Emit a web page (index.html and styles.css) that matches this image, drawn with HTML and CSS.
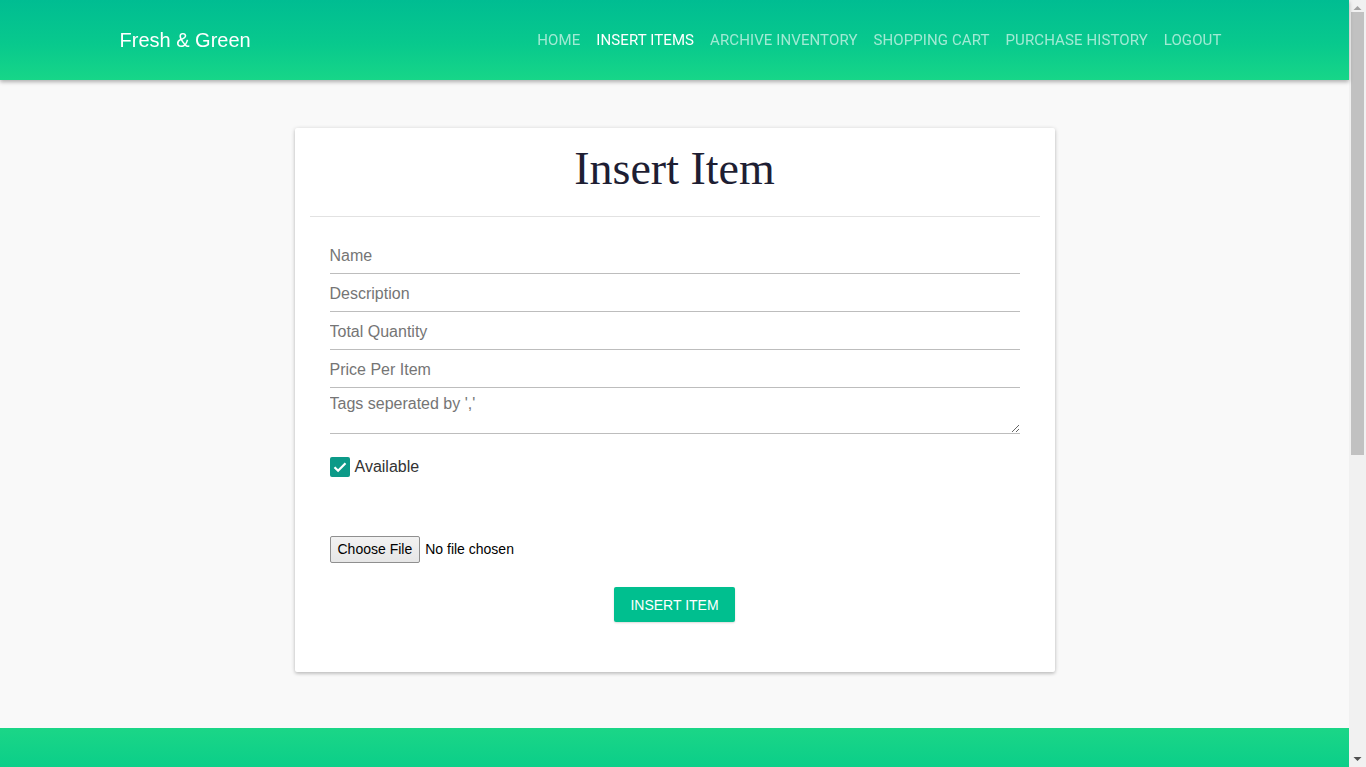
FILE: index.html
```html
<!DOCTYPE html>
<html lang="en">
<head>
<meta charset="utf-8">
<title>Insert Item</title>
<link rel="stylesheet" href="styles.css">
</head>
<body>
<div class="page">
  <header class="topbar">
    <div class="container topbar-inner">
      <a class="brand" href="#">Fresh &amp; Green</a>
      <nav class="nav">
        <a class="nav-link" href="#">HOME</a>
        <a class="nav-link active" href="#">INSERT ITEMS</a>
        <a class="nav-link" href="#">ARCHIVE INVENTORY</a>
        <a class="nav-link" href="#">SHOPPING CART</a>
        <a class="nav-link" href="#">PURCHASE HISTORY</a>
        <a class="nav-link" href="#">LOGOUT</a>
      </nav>
    </div>
  </header>

  <main class="main">
    <section class="card">
      <h1 class="card-title">Insert Item</h1>
      <hr class="divider">
      <form class="form">
        <input class="field" type="text" placeholder="Name">
        <input class="field" type="text" placeholder="Description">
        <input class="field" type="text" placeholder="Total Quantity">
        <input class="field" type="text" placeholder="Price Per Item">
        <textarea class="field area" placeholder="Tags seperated by ','"></textarea>
        <label class="check-row">
          <input class="check" type="checkbox" checked>
          <span>Available</span>
        </label>
        <div class="file-row">
          <input class="file" type="file">
        </div>
        <div class="actions">
          <button class="btn" type="button">INSERT ITEM</button>
        </div>
      </form>
    </section>
  </main>

  <footer class="footer"></footer>
</div>

<div class="scrollbar" aria-hidden="true">
  <svg class="sb-arrow" width="17" height="17" viewBox="0 0 17 17"><path d="M4.5 10h8l-4-4z" fill="#a3a3a3"/></svg>
  <div class="sb-track"><div class="sb-thumb"></div></div>
  <svg class="sb-arrow" width="17" height="17" viewBox="0 0 17 17"><path d="M4.5 7h8l-4 4z" fill="#505050"/></svg>
</div>
</body>
</html>
```

FILE: styles.css
```css
* { box-sizing: border-box; }

html, body {
  margin: 0;
  padding: 0;
}

body {
  background: #f9f9f9;
  font-family: "Liberation Sans", Arial, sans-serif;
  color: #333;
}

.page {
  width: 1349px;
}

.container {
  max-width: 1140px;
  margin: 0 auto;
  padding: 0 15px;
}

.topbar {
  height: 80px;
  background: linear-gradient(180deg, #00bd92 0%, #08c98d 55%, #17d688 100%);
  box-shadow: 0 2px 4px rgba(0, 0, 0, 0.3);
  position: relative;
  z-index: 2;
}

.topbar-inner {
  height: 80px;
  display: flex;
  align-items: center;
  justify-content: space-between;
}

.brand {
  color: #fff;
  text-decoration: none;
  font-size: 20px;
  font-family: "Liberation Sans", Arial, sans-serif;
}

.nav {
  display: flex;
  align-items: center;
}

.nav-link {
  font-family: Roboto, "Liberation Sans", sans-serif;
  font-size: 15px;
  letter-spacing: 0.1px;
  color: rgba(255, 255, 255, 0.62);
  text-decoration: none;
  padding: 0 8px;
}

.nav-link.active {
  color: #fff;
}

.main {
  padding: 48px 0 56px;
}

.card {
  width: 760px;
  margin: 0 auto;
  background: #fff;
  border-radius: 2px;
  box-shadow: 0 1px 4px rgba(0, 0, 0, 0.22), 0 2px 3px rgba(0, 0, 0, 0.08);
  padding: 15px 15px 50px;
}

.card-title {
  margin: 0;
  text-align: center;
  font-family: "Liberation Serif", "DejaVu Serif", serif;
  font-weight: 400;
  font-size: 46px;
  line-height: 51px;
  color: #1e1e33;
  padding-bottom: 4px;
}

.divider {
  border: 0;
  border-top: 1px solid #e2e2e2;
  margin: 18px 0 19px;
}

.form {
  padding: 0 20px;
  display: flex;
  flex-direction: column;
}

.field {
  display: block;
  width: 100%;
  height: 38px;
  border: 0;
  border-bottom: 1px solid #bdbdbd;
  padding: 2px 0 0;
  margin: 0;
  font-family: "Liberation Sans", Arial, sans-serif;
  font-size: 16px;
  color: #333;
  background: transparent;
  outline: none;
}

.field::placeholder {
  color: #757575;
}

.area {
  height: 46px;
  padding-top: 7px;
  line-height: 18px;
  resize: vertical;
}

.check-row {
  display: flex;
  align-items: center;
  gap: 5px;
  margin-top: 23px;
  font-size: 16px;
  color: #333;
  height: 20px;
}

.check {
  appearance: none;
  -webkit-appearance: none;
  margin: 0;
  width: 20px;
  height: 20px;
  border-radius: 2px;
  background: #0c9a88 url("data:image/svg+xml,%3Csvg xmlns='http://www.w3.org/2000/svg' viewBox='0 0 20 20'%3E%3Cpath d='M4.5 10.2l3.6 3.6 7.4-7.6' fill='none' stroke='white' stroke-width='2.2'/%3E%3C/svg%3E") center / 20px 20px no-repeat;
}

.file-row {
  margin-top: 59px;
  height: 27px;
}

.file {
  font-family: "Liberation Sans", Arial, sans-serif;
  font-size: 14px;
  color: #000;
}

.file::file-selector-button {
  font-family: "Liberation Sans", Arial, sans-serif;
  font-size: 14px;
  color: #000;
  padding: 4px 7px 5px;
  border: 1px solid #8f8f8f;
  border-radius: 2px;
  background: linear-gradient(#f2f2f2, #e6e6e6);
  margin-right: 5px;
}

.actions {
  display: flex;
  justify-content: center;
  margin-top: 24px;
}

.btn {
  height: 35px;
  padding: 0 16px;
  border: 0;
  border-radius: 2px;
  background: #00bf8f;
  color: #fff;
  font-family: "Liberation Sans", Arial, sans-serif;
  font-size: 14px;
  box-shadow: 0 1px 2px rgba(0, 0, 0, 0.15);
}

.footer {
  height: 541px;
  background: linear-gradient(180deg, #1bd687 0px, #0bce89 40px, #00c08f 541px);
}

.scrollbar {
  position: fixed;
  top: 0;
  right: 0;
  width: 17px;
  height: 100vh;
  background: #f1f1f1;
  display: flex;
  flex-direction: column;
}

.sb-arrow {
  display: block;
  flex: none;
}

.sb-track {
  flex: 1;
  padding: 0 2px;
}

.sb-thumb {
  height: 443px;
  margin-top: -5px;
  background: #c1c1c1;
}
```
